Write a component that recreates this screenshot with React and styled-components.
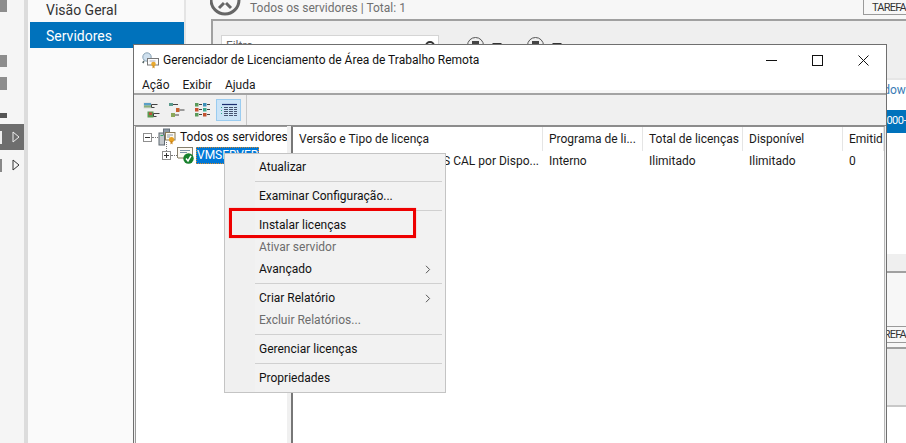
import styled, { createGlobalStyle } from 'styled-components'

const GlobalStyle = createGlobalStyle`
  html, body {
    margin: 0;
    padding: 0;
    height: 100%;
    overflow: hidden;
    background: #fff;
  }
  #root {
    height: 443px;
    font-family: Roboto, "Noto Sans", "Liberation Sans", sans-serif;
    font-size: 12px;
    color: #1a1a1a;
  }
`

const Desktop = styled.div`
  position: relative;
  display: flex;
  width: 906px;
  height: 443px;
  overflow: hidden;
`

const Rail = styled.div`
  width: 24px;
  flex: none;
  background: #f5f5f5;
  border-right: 4px solid #dcdcdc;
  display: flex;
  flex-direction: column;
`

const RailMark = styled.div`
  height: ${p => p.$h}px;
  margin-bottom: ${p => p.$gap}px;
  width: ${p => p.$w || 7}px;
  background: ${p => p.$c || '#8d8d8d'};
`

const RailRow = styled.div`
  height: ${p => p.$h}px;
  margin-bottom: ${p => p.$gap || 0}px;
  background: ${p => (p.$active ? '#6e6e6e' : 'transparent')};
  display: flex;
  align-items: center;
  justify-content: space-between;
  padding-right: 4px;
`

const RailStub = styled.span`
  width: 2px;
  height: 13px;
  background: ${p => p.$c};
`

const Nav = styled.nav`
  width: 154px;
  flex: none;
  background: #fafafa;
  border-right: 2px solid #e4e4e4;
  padding-left: 2px;
`

const NavItem = styled.div`
  height: ${p => (p.$active ? 26 : 22)}px;
  line-height: ${p => (p.$active ? 28 : 21)}px;
  padding-left: 16px;
  font-size: 14px;
  color: ${p => (p.$active ? '#fff' : '#333')};
  background: ${p => (p.$active ? '#0072bc' : 'transparent')};
`

const Main = styled.main`
  flex: 1;
  min-width: 0;
  display: flex;
  flex-direction: column;
  background: #f7f7f7;
`

const TopBar = styled.header`
  height: 19px;
  flex: none;
  display: flex;
  padding-left: 24px;
  box-sizing: border-box;
`

const TitleText = styled.div`
  margin-left: 7px;
  line-height: 16px;
  font-size: 12px;
  color: #707070;
  white-space: nowrap;
`

const TasksButton = styled.div`
  height: ${p => p.$h || 16}px;
  width: 43px;
  flex: none;
  margin-left: auto;
  box-sizing: border-box;
  border: 1px solid #9a9a9a;
  border-top: ${p => (p.$closed ? '1px solid #9a9a9a' : 'none')};
  border-right: none;
  padding-left: 8px;
  font-size: 11px;
  letter-spacing: -0.8px;
  line-height: 15px;
  color: #333;
  white-space: nowrap;
  overflow: hidden;
`

const Panel = styled.section`
  margin: ${p => p.$top || 0}px 0 0 25px;
  border-left: 2px solid #a0a0a0;
  flex: none;
  box-sizing: border-box;
  height: ${p => p.$h}px;
  background: ${p => p.$bg};
  border-top: ${p => (p.$line ? `2px solid ${p.$line}` : 'none')};
`

const FilterRow = styled.div`
  display: flex;
  height: 24px;
  margin: 14px 0 0 8px;
`

const FilterBox = styled.div`
  width: 218px;
  height: 24px;
  box-sizing: border-box;
  background: #fff;
  border: 1px solid #d5d5d5;
  padding: 3px 4px;
  color: #666;
  position: relative;
`

const SearchRing = styled.span`
  position: absolute;
  right: 3px;
  top: 5px;
  width: 6px;
  height: 6px;
  border: 2px solid #333;
  border-radius: 50%;
`

const RoundButton = styled.span`
  width: 15px;
  height: 12px;
  margin: 2px 0 0 ${p => p.$left}px;
  border: 1px solid #555;
  border-radius: 50%;
  flex: none;
  display: flex;
  justify-content: center;
  padding-top: 3px;
  &::before {
    content: '';
    width: 7px;
    height: 5px;
    background: #444;
  }
`

const DropArrow = styled.span`
  margin: 8px 0 0 8px;
  width: 0;
  height: 0;
  border: 5px solid transparent;
  border-top: 5px solid #333;
  border-bottom: none;
  flex: none;
`

const LinkLine = styled.div`
  height: 30px;
  padding: 3px 0 0 0;
  margin-right: -6px;
  box-sizing: border-box;
  text-align: right;
  color: #3b7bb5;
  font-size: 12px;
  white-space: nowrap;
`

const SelectedLine = styled.div`
  height: 23px;
  background: #0072bc;
  color: #fff;
  font-size: 11px;
  letter-spacing: -0.5px;
  line-height: 22px;
  text-align: right;
  white-space: nowrap;
`

const Window = styled.div`
  position: absolute;
  left: 133px;
  top: 44px;
  width: 754px;
  height: 399px;
  box-sizing: border-box;
  background: #fff;
  border: 1px solid #6f6f6f;
  border-bottom: none;
  display: flex;
  flex-direction: column;
`

const TitleBar = styled.div`
  height: 30px;
  flex: none;
  display: flex;
  align-items: center;
  padding-left: 8px;
  color: #111;
`

const WindowTitle = styled.span`
  margin-left: 4px;
  white-space: nowrap;
`

const WindowControls = styled.div`
  margin-left: auto;
  display: flex;
`

const WindowControl = styled.span`
  width: 46px;
  height: 30px;
  display: flex;
  align-items: center;
  justify-content: center;
`

const MenuBar = styled.div`
  height: 20px;
  flex: none;
  box-sizing: border-box;
  display: flex;
  gap: 13px;
  padding: 1px 0 0 8px;
  align-items: center;
  border-bottom: 2px solid #a3a3a3;
  box-shadow: inset 0 -3px 0 #f7f7f7;
`

const Toolbar = styled.div`
  height: 31px;
  flex: none;
  display: flex;
  align-items: center;
  padding-left: 4px;
  background: #f0f0f0;
  border-bottom: 1px solid #8c8c8c;
  box-sizing: border-box;
`

const ToolButton = styled.span`
  width: 25px;
  height: 22px;
  margin-right: 1px;
  box-sizing: border-box;
  display: flex;
  align-items: center;
  justify-content: center;
  background: ${p => (p.$active ? '#cce4f7' : 'transparent')};
  border: 1px solid ${p => (p.$active ? '#9accf0' : 'transparent')};
`

const ToolDivider = styled.span`
  width: 1px;
  height: 30px;
  margin-left: 4px;
  background: #c8c8c8;
`

const Body = styled.div`
  flex: 1;
  min-height: 0;
  display: flex;
  background: #f0f0f0;
  padding: 0 1px;
`

const TreePane = styled.div`
  width: 152px;
  flex: none;
  box-sizing: border-box;
  background: #fff;
  border-left: 1px solid #9a9a9a;
  border-top: 1px solid #9a9a9a;
  padding-top: 1px;
  position: relative;
  overflow: hidden;
`

const TreeRow = styled.div`
  height: 18px;
  display: flex;
  align-items: center;
  padding-left: ${p => p.$indent}px;
  white-space: nowrap;
  svg {
    flex: none;
  }
`

const Expander = styled.span`
  width: 9px;
  height: 9px;
  box-sizing: border-box;
  border: 1px solid #8f8f8f;
  background: #fff;
  flex: none;
  position: relative;
  &::before {
    content: '';
    position: absolute;
    left: 1px;
    right: 1px;
    top: 3px;
    height: 1px;
    background: #333;
  }
  &::after {
    content: '';
    display: ${p => (p.$open ? 'none' : 'block')};
    position: absolute;
    top: 1px;
    bottom: 1px;
    left: 3px;
    width: 1px;
    background: #333;
  }
`

const Dots = styled.span`
  width: ${p => p.$w}px;
  border-top: 1px dotted #777;
  flex: none;
`

const TreeStem = styled.span`
  position: absolute;
  left: 30px;
  top: 15px;
  height: 9px;
  border-left: 1px dotted #777;
`

const TreeLabel = styled.span`
  margin-left: ${p => p.$left}px;
  padding: 0 1px;
  color: ${p => (p.$selected ? '#fff' : '#111')};
  background: ${p => (p.$selected ? '#0078d7' : 'transparent')};
  outline: ${p => (p.$selected ? '1px dotted #d98a2b' : 'none')};
  outline-offset: -1px;
  line-height: 17px;
`

const ListPane = styled.div`
  flex: 1;
  min-width: 0;
  margin-left: 4px;
  background: #fff;
  border-left: 2px solid #777;
  border-top: 1px solid #8c8c8c;
  border-right: 1px solid #b8b8b8;
`

const ListRow = styled.div`
  display: grid;
  grid-template-columns: 250px 100px 100px 100px 1fr;
  height: ${p => p.$h}px;
  align-items: center;
`

const Cell = styled.span`
  padding-left: 6px;
  height: 100%;
  display: flex;
  align-items: center;
  justify-content: ${p => (p.$end ? 'flex-end' : 'flex-start')};
  padding-right: ${p => (p.$end ? 4 : 0)}px;
  border-right: ${p => (p.$head ? '1px solid #e5e5e5' : 'none')};
  white-space: nowrap;
  overflow: hidden;
  color: #1a1a1a;
`

const Menu = styled.div`
  position: absolute;
  left: 224px;
  top: 153px;
  width: 222px;
  height: 240px;
  box-sizing: border-box;
  border: 1px solid #c4c4c4;
  padding: 2px;
  background: linear-gradient(90deg, #f0f0f0 30px, #f2f2f2 30px);
`

const MenuItem = styled.div`
  height: 22px;
  box-sizing: border-box;
  display: flex;
  align-items: center;
  justify-content: space-between;
  padding: 0 12px 0 32px;
  color: ${p => (p.$disabled ? '#6d6d6d' : '#111')};
`

const MenuSeparator = styled.div`
  height: 1px;
  margin: 3px 1px 3px 28px;
  background: #d0d0d0;
`

const Highlight = styled.div`
  position: absolute;
  left: 229px;
  top: 208px;
  width: 187px;
  height: 30px;
  box-sizing: border-box;
  border: 3px solid #ee0000;
  box-shadow: 0 0 1px #f08080;
`

const Chevron = () => (
  <svg width="6" height="9" viewBox="0 0 6 9" fill="none">
    <path d="M1 .8 4.6 4.5 1 8.2" stroke="#555" />
  </svg>
)

const RingIcon = () => (
  <svg width="33" height="16" viewBox="0 0 33 16" fill="none">
    <circle cx="15" cy="0" r="14" stroke="#666" strokeWidth="3" />
    <path d="M9 8 14 3M21 8 16 3" stroke="#666" strokeWidth="3" />
  </svg>
)

const LicenseIcon = () => (
  <svg width="17" height="17" viewBox="0 0 17 17">
    <circle cx="5" cy="5" r="4.2" fill="#cfe0ee" stroke="#8aa2b4" />
    <path d="M2 9 .8 11" stroke="#566" strokeWidth="1.5" />
    <rect x="5.5" y="6.5" width="11" height="6.5" fill="#fdfdfd" stroke="#777" />
    <path d="M7.5 9h6" stroke="#aab" />
    <circle cx="11.5" cy="12" r="2.3" fill="#e8a92e" />
    <path d="M10.5 13.5v3l1-1 1 1v-3" fill="#d09020" />
  </svg>
)

const ServersIcon = () => (
  <svg width="18" height="18" viewBox="0 0 18 18">
    <rect x="1" y="5" width="5.5" height="12" fill="#c3c8cd" stroke="#5f6870" />
    <rect x="2.5" y="7" width="2.5" height="1" fill="#3a6" />
    <rect x="5.5" y="1" width="6" height="6" fill="#8b98a5" stroke="#66707a" />
    <rect x="7.5" y="4.5" width="9.5" height="7.5" fill="#fdf9f0" stroke="#8a7a55" />
    <path d="M9 7h6M9 9h3" stroke="#8899aa" />
    <circle cx="13.5" cy="11.5" r="2.6" fill="#e8a020" />
    <path d="M12.5 13v3.5l1-1 1 1V13" fill="#c98318" />
  </svg>
)

const ServerIcon = () => (
  <svg width="17" height="17" viewBox="0 0 17 17">
    <rect x=".5" y=".5" width="15" height="10" fill="#fdfaf3" stroke="#857e6c" />
    <path d="M3 3.5h10M3 5.5h7" stroke="#7e93a8" />
    <rect x="1" y="10" width="14" height="2" fill="#bdb8a6" />
    <circle cx="11.5" cy="11.5" r="5.2" fill="#17802c" />
    <path d="M9 11.5l2 2.4 3-5" fill="none" stroke="#fff" strokeWidth="1.5" />
  </svg>
)

const Tool1 = () => (
  <svg width="18" height="16" viewBox="0 0 18 16">
    <rect x="1.5" y=".5" width="8" height="6" fill="#d9d9d9" />
    <rect x="2" y="1" width="7" height="2.5" fill="#5a9fc8" />
    <rect x="2" y="3.5" width="7" height="2" fill="#8ab07a" />
    <path d="M9.5 2.5h6M9.5 2.5v3h3" stroke="#444" fill="none" />
    <rect x="5.5" y="9.5" width="6" height="6" fill="#5a9a50" />
    <rect x="7" y="10.5" width="3" height="2.5" fill="#c0503a" />
    <path d="M11.5 11.5h6M11.5 11.5v3h3" stroke="#444" fill="none" />
  </svg>
)

const Tool2 = () => (
  <svg width="18" height="16" viewBox="0 0 18 16">
    <rect x="1" y="1" width="4" height="3" fill="#5a9a8c" />
    <path d="M5 2.5h5" stroke="#444" />
    <rect x="8" y="6" width="3.5" height="4" fill="#c8602e" />
    <path d="M11.5 8h5M5 11v3" stroke="#444" />
    <rect x="3" y="11" width="4" height="4" fill="#8aa85a" />
    <path d="M7 13h4" stroke="#444" />
  </svg>
)

const Tool3 = () => (
  <svg width="18" height="16" viewBox="0 0 18 16">
    {[1, 6, 11].map(y => (
      <g key={y}>
        <rect x="1" y={y} width="3.5" height="3.5" fill={y === 6 ? '#c8502e' : '#5a9a5a'} />
        <path d={`M5 ${y + 1.5}h3`} stroke="#444" />
        <rect x="9" y={y} width="3.5" height="3.5" fill={y === 1 ? '#3b8fb8' : y === 6 ? '#3ba88c' : '#c0502e'} />
        <path d={`M13 ${y + 1.5}h3`} stroke="#444" />
      </g>
    ))}
  </svg>
)

const Tool4 = () => (
  <svg width="16" height="15" viewBox="0 0 16 15">
    <path d="M1 1.5h15" stroke="#1d2f6f" strokeWidth="1.2" />
    {[4.5, 6.5, 8.5, 10.5, 12.5].map(y => (
      <path key={y} d={`M3 ${y}h13`} stroke="#47536f" strokeDasharray="4 1" />
    ))}
    <path d="M.5 4v1M.5 7v1M.5 10v1" stroke="#3a8" />
  </svg>
)

const columns = ['Versão e Tipo de licença', 'Programa de li...', 'Total de licenças', 'Disponível', 'Emitid']
const values = ['Windows Server - RDS CAL por Dispo...', 'Interno', 'Ilimitado', 'Ilimitado', '0']

export default function App() {
  return (
    <>
      <GlobalStyle />
      <Desktop>
        <Rail>
          <RailMark $h={12} $gap={43} />
          <RailMark $h={12} $gap={10} />
          <RailMark $h={13} $gap={23} />
          <RailMark $h={5} $gap={6} $c="#555" />
          <RailRow $active $h={26} $gap={8}>
            <RailStub $c="#eee" />
            <svg width="8" height="12" viewBox="0 0 8 12" fill="none">
              <path d="M1 1 7 6 1 11Z" stroke="#eee" />
            </svg>
          </RailRow>
          <RailRow $h={14}>
            <RailStub $c="#888" />
            <svg width="8" height="12" viewBox="0 0 8 12" fill="none">
              <path d="M1 1 7 6 1 11Z" stroke="#333" />
            </svg>
          </RailRow>
        </Rail>
        <Nav>
          <NavItem>Visão Geral</NavItem>
          <NavItem $active>Servidores</NavItem>
        </Nav>
        <Main>
          <TopBar>
            <RingIcon />
            <TitleText>Todos os servidores | Total: 1</TitleText>
            <TasksButton $h={15}>TAREFAS</TasksButton>
          </TopBar>
          <Panel $h={59} $bg="#efefef" $line="#a0a0a0">
            <FilterRow>
              <FilterBox>
                Filtro
                <SearchRing />
              </FilterBox>
              <RoundButton $left={28} />
              <DropArrow />
              <RoundButton $left={25} />
              <DropArrow />
            </FilterRow>
          </Panel>
          <Panel $h={176} $bg="#fff" $line="#e6e6e6">
            <LinkLine>Windows</LinkLine>
            <SelectedLine>00000-</SelectedLine>
          </Panel>
          <Panel $h={17} $bg="#efefef" />
          <Panel $h={55} $bg="#f7f7f7" $line="#a0a0a0" />
          <TasksButton $closed $h={17}>TAREFAS</TasksButton>
          <Panel $top={4} $h={58} $bg="#efefef" $line="#a0a0a0" />
          <Panel $h={38} $bg="#fff" $line="#c8c8c8" />
        </Main>

        <Window>
          <TitleBar>
            <LicenseIcon />
            <WindowTitle>Gerenciador de Licenciamento de Área de Trabalho Remota</WindowTitle>
            <WindowControls>
              <WindowControl>
                <svg width="11" height="11" viewBox="0 0 11 11"><path d="M0 5.5h11" stroke="#111" /></svg>
              </WindowControl>
              <WindowControl>
                <svg width="11" height="11" viewBox="0 0 11 11" fill="none"><rect x=".5" y=".5" width="10" height="10" stroke="#111" /></svg>
              </WindowControl>
              <WindowControl>
                <svg width="11" height="11" viewBox="0 0 11 11" fill="none"><path d="M.5.5l10 10M10.5.5l-10 10" stroke="#111" /></svg>
              </WindowControl>
            </WindowControls>
          </TitleBar>
          <MenuBar>
            <span>Ação</span>
            <span>Exibir</span>
            <span>Ajuda</span>
          </MenuBar>
          <Toolbar>
            <ToolButton><Tool1 /></ToolButton>
            <ToolButton><Tool2 /></ToolButton>
            <ToolButton><Tool3 /></ToolButton>
            <ToolButton $active><Tool4 /></ToolButton>
            <ToolDivider />
          </Toolbar>
          <Body>
            <TreePane>
              <TreeStem />
              <TreeRow $indent={7}>
                <Expander $open />
                <Dots $w={6} />
                <ServersIcon />
                <TreeLabel $left={3}>Todos os servidores</TreeLabel>
              </TreeRow>
              <TreeRow $indent={26}>
                <Expander />
                <Dots $w={6} />
                <ServerIcon />
                <TreeLabel $left={2} $selected>VMSERVER</TreeLabel>
              </TreeRow>
            </TreePane>
            <ListPane>
              <ListRow $h={24}>
                {columns.map(c => <Cell key={c} $head>{c}</Cell>)}
              </ListRow>
              <ListRow $h={20}>
                {values.map((v, i) => <Cell key={v + i} $end={i === 0}>{v}</Cell>)}
              </ListRow>
            </ListPane>
          </Body>
        </Window>

        <Menu>
          <MenuItem>Atualizar</MenuItem>
          <MenuSeparator />
          <MenuItem>Examinar Configuração...</MenuItem>
          <MenuSeparator />
          <MenuItem>Instalar licenças</MenuItem>
          <MenuItem $disabled>Ativar servidor</MenuItem>
          <MenuItem>Avançado<Chevron /></MenuItem>
          <MenuSeparator />
          <MenuItem>Criar Relatório<Chevron /></MenuItem>
          <MenuItem $disabled>Excluir Relatórios...</MenuItem>
          <MenuSeparator />
          <MenuItem>Gerenciar licenças</MenuItem>
          <MenuSeparator />
          <MenuItem>Propriedades</MenuItem>
        </Menu>
        <Highlight />
      </Desktop>
    </>
  )
}
